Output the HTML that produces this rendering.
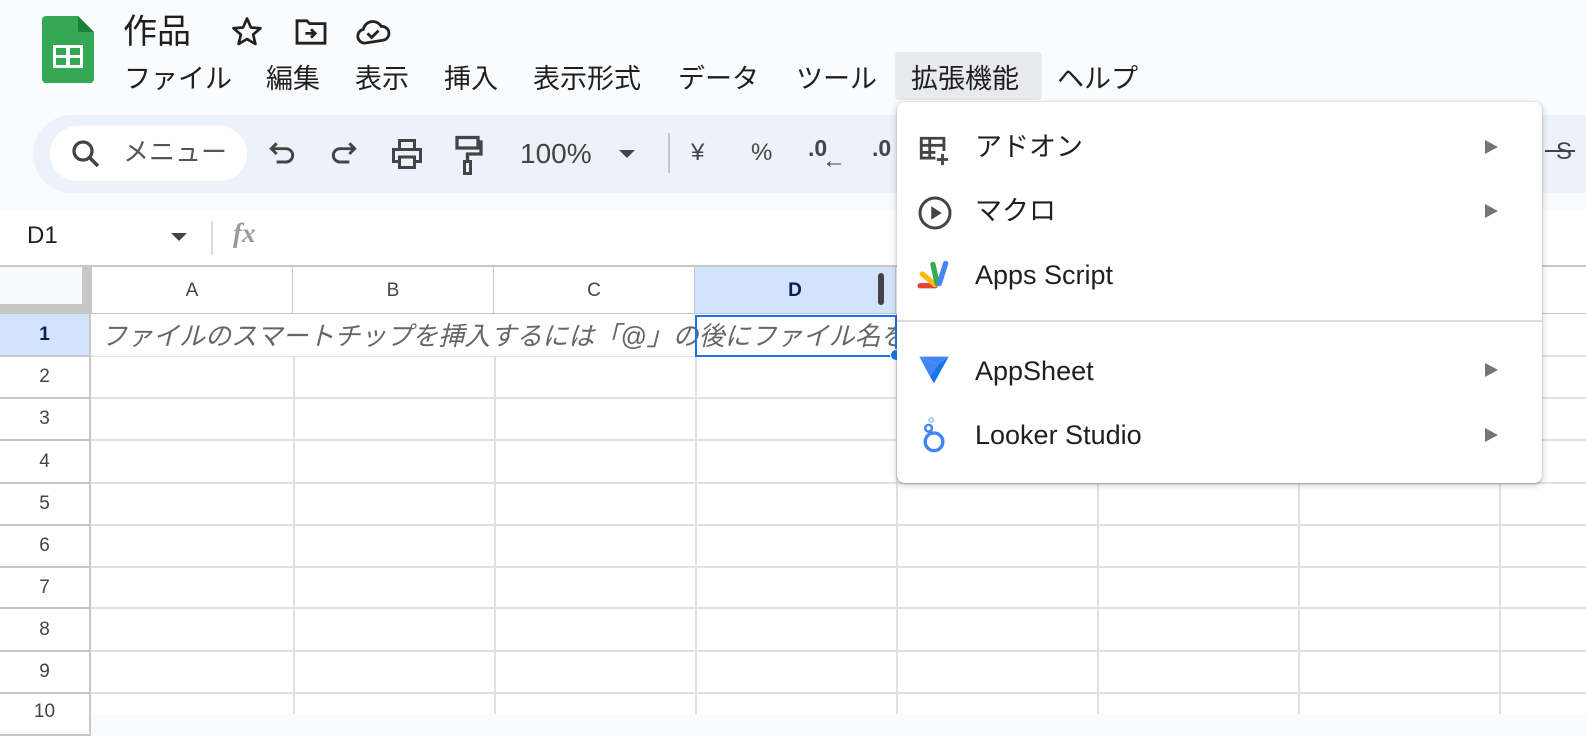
<!DOCTYPE html>
<html><head><meta charset="utf-8"><style>
*{box-sizing:border-box;margin:0;padding:0}
body{width:1586px;height:714px;overflow:hidden;background:#f9fbfd;font-family:"Liberation Sans","Noto Sans CJK JP",sans-serif;color:#1f1f1f;position:relative}
.abs{position:absolute}
.menu span{position:absolute;top:62px;font-size:27px;color:#1f1f1f;line-height:34px}
.tb{position:absolute;left:33px;top:115px;width:1600px;height:78px;background:#edf2fa;border-radius:40px}
.search{position:absolute;left:50px;top:126px;width:197px;height:55px;background:#fff;border-radius:28px;overflow:hidden}
.hdr{position:absolute;top:267px;height:47px;background:#f8f9fa;border-right:1px solid #c7c7c7;border-bottom:1px solid #c7c7c7;text-align:center;line-height:47px;font-size:19px;color:#444}
.rh{position:absolute;left:0;width:91px;border-bottom:2px solid #c7c7c7;border-right:2px solid #c7c7c7;background:#fff;text-align:center;font-size:19px;color:#444}
.hl{position:absolute;height:2px;background:#e1e1e1;left:91px;right:0}
.vl{position:absolute;width:2px;background:#e1e1e1;top:314px;bottom:0}
.dd{position:absolute;left:897px;top:102px;width:645px;height:381px;background:#fff;border-radius:8px;box-shadow:0 2px 6px 2px rgba(60,64,67,.15),0 1px 2px rgba(60,64,67,.3)}
.it{position:absolute;left:78px;font-size:27px;color:#1f1f1f;line-height:32px}
.ar{position:absolute;left:588px;width:0;height:0;border-top:7px solid transparent;border-bottom:7px solid transparent;border-left:13px solid #757575}
</style></head><body>
<svg class="abs" style="left:42px;top:16px" width="52" height="67" viewBox="0 0 52 67">
<path d="M4 0H36L52 16V63a4 4 0 0 1-4 4H4a4 4 0 0 1-4-4V4a4 4 0 0 1 4-4z" fill="#34a853"/>
<path d="M36 0L52 16H38a2 2 0 0 1-2-2z" fill="#188038"/>
<rect x="11" y="29" width="30" height="23" fill="#fff"/>
<rect x="14" y="32" width="10" height="7" fill="#34a853"/><rect x="28" y="32" width="10" height="7" fill="#34a853"/>
<rect x="14" y="42" width="10" height="7" fill="#34a853"/><rect x="28" y="42" width="10" height="7" fill="#34a853"/>
</svg>
<div class="abs" style="left:123px;top:10px;font-size:34px;color:#1f1f1f;line-height:44px">作品</div>
<svg class="abs" style="left:229px;top:14px" width="36" height="36" viewBox="0 0 24 24"><path d="M12 3l2.6 6 6.4.5-4.9 4.2 1.5 6.3L12 16.7 6.4 20l1.5-6.3L3 9.5 9.4 9z" fill="none" stroke="#222" stroke-width="1.8" stroke-linejoin="round"/></svg>
<svg class="abs" style="left:294px;top:18px" width="34" height="28" viewBox="0 0 24 20"><path d="M2 2h7l2 2h11v14H2z" fill="none" stroke="#222" stroke-width="2"/><path d="M8 11h7M12 8l3 3-3 3" fill="none" stroke="#222" stroke-width="2"/></svg>
<svg class="abs" style="left:355px;top:18px" width="36" height="28" viewBox="0 0 26 20"><path d="M7 18a5 5 0 0 1-1-9.9A7 7 0 0 1 19 6a5 5 0 0 1 1 10z" fill="none" stroke="#222" stroke-width="2"/><path d="M9 11l3 3 5-5" fill="none" stroke="#222" stroke-width="2"/></svg>
<div class="menu">
<span style="left:124px">ファイル</span><span style="left:266px">編集</span><span style="left:355px">表示</span><span style="left:444px">挿入</span><span style="left:533px">表示形式</span><span style="left:678px">データ</span><span style="left:796px">ツール</span>
<div class="abs" style="left:895px;top:52px;width:147px;height:48px;background:#e8eaed;border-radius:4px"></div>
<span style="left:911px">拡張機能</span><span style="left:1057px">ヘルプ</span>
</div>
<div class="tb"></div>
<div class="search"><div class="abs" style="left:73px;top:9px;font-size:26px;color:#555;white-space:nowrap;line-height:34px">メニュー</div></div>
<svg class="abs" style="left:68px;top:136px" width="36" height="36" viewBox="0 0 24 24"><circle cx="10" cy="10" r="6" fill="none" stroke="#444" stroke-width="2.2"/><path d="M14.5 14.5L20 20" stroke="#444" stroke-width="2.4"/></svg>
<svg class="abs" style="left:266px;top:138px" width="32" height="32" viewBox="0 0 24 24"><path d="M5 8h10a5 5 0 0 1 0 10H8M8 4L4 8l4 4" fill="none" stroke="#444" stroke-width="2.2"/></svg>
<svg class="abs" style="left:328px;top:138px" width="32" height="32" viewBox="0 0 24 24"><path d="M19 8H9a5 5 0 0 0 0 10h7M16 4l4 4-4 4" fill="none" stroke="#444" stroke-width="2.2"/></svg>
<svg class="abs" style="left:389px;top:136px" width="36" height="36" viewBox="0 0 24 24"><path d="M7 8V3h10v5M6 17H3V9h18v8h-3M7 14h10v7H7z" fill="none" stroke="#444" stroke-width="2"/></svg>
<svg class="abs" style="left:454px;top:134px" width="30" height="43" viewBox="0 0 20 28"><rect x="2" y="2" width="14" height="7" fill="none" stroke="#444" stroke-width="2.2"/><path d="M16 5h2v8H9v5" fill="none" stroke="#444" stroke-width="2.2"/><rect x="7" y="18" width="4" height="8" fill="none" stroke="#444" stroke-width="2"/></svg>
<div class="abs" style="left:520px;top:137px;font-size:28px;color:#444;line-height:34px">100%</div>
<div class="abs" style="left:619px;top:150px;border-left:8px solid transparent;border-right:8px solid transparent;border-top:8px solid #444"></div>
<div class="abs" style="left:668px;top:133px;width:2px;height:40px;background:#c7c7c7"></div>
<div class="abs" style="left:691px;top:139px;font-size:24px;color:#444">¥</div>
<div class="abs" style="left:751px;top:139px;font-size:24px;color:#444">%</div>
<div class="abs" style="left:808px;top:135px;font-size:23px;color:#444;font-weight:bold">.0</div>
<div class="abs" style="left:822px;top:147px;font-size:24px;color:#444;font-weight:bold">←</div>
<div class="abs" style="left:872px;top:135px;font-size:23px;color:#444;font-weight:bold">.0</div>
<div class="abs" style="left:1545px;top:150px;width:30px;height:2px;background:#444"></div>
<div class="abs" style="left:1556px;top:138px;font-size:24px;color:#444">S</div>
<div class="abs" style="left:0;top:210px;width:1586px;height:57px;background:#fff"></div>
<div class="abs" style="left:27px;top:222px;font-size:24px;color:#1f1f1f">D1</div>
<div class="abs" style="left:171px;top:233px;border-left:8px solid transparent;border-right:8px solid transparent;border-top:8px solid #444"></div>
<div class="abs" style="left:211px;top:221px;width:2px;height:34px;background:#dadce0"></div>
<div class="abs" style="left:233px;top:218px;font-size:27px;color:#999;font-style:italic;font-weight:bold;font-family:'Liberation Serif',serif">fx</div>
<div class="abs" style="left:0;top:265px;width:1586px;height:2px;background:#c7c7c7"></div>
<div class="abs" style="left:0;top:314px;width:1586px;height:400px;background:#fff"></div>
<div class="hdr" style="left:0;width:92px;border-right:10px solid #c7c7c7;border-bottom:10px solid #c7c7c7"></div>
<div class="hdr" style="left:92px;width:201px;background:#fff">A</div>
<div class="hdr" style="left:293px;width:201px;background:#fff">B</div>
<div class="hdr" style="left:494px;width:201px;background:#fff">C</div>
<div class="hdr" style="left:695px;width:201px;background:#d3e3fd;color:#0b1e4e;font-weight:bold">D</div>
<div class="abs" style="left:878px;top:273px;width:6px;height:32px;background:#444;border-radius:3px"></div>
<div class="hdr" style="left:896px;width:201px;background:#fff"></div>
<div class="hdr" style="left:1097px;width:201px;background:#fff"></div>
<div class="hdr" style="left:1298px;width:201px;background:#fff"></div>
<div class="hdr" style="left:1499px;width:100px;background:#fff"></div>
<div class="vl" style="left:293px"></div><div class="vl" style="left:494px"></div><div class="vl" style="left:695px"></div><div class="vl" style="left:896px"></div><div class="vl" style="left:1097px"></div><div class="vl" style="left:1298px"></div><div class="vl" style="left:1499px"></div>
<div class="hl" style="top:355px"></div><div class="hl" style="top:397px"></div><div class="hl" style="top:439px"></div><div class="hl" style="top:482px"></div><div class="hl" style="top:524px"></div><div class="hl" style="top:566px"></div><div class="hl" style="top:607px"></div><div class="hl" style="top:650px"></div><div class="hl" style="top:692px"></div>
<div class="rh" style="top:314px;height:43px;line-height:41px;background:#d3e3fd;color:#0b1e4e;font-weight:bold">1</div>
<div class="rh" style="top:357px;height:42px;line-height:40px">2</div>
<div class="rh" style="top:399px;height:42px;line-height:40px">3</div>
<div class="rh" style="top:441px;height:43px;line-height:41px">4</div>
<div class="rh" style="top:484px;height:42px;line-height:40px">5</div>
<div class="rh" style="top:526px;height:42px;line-height:40px">6</div>
<div class="rh" style="top:568px;height:41px;line-height:39px">7</div>
<div class="rh" style="top:609px;height:43px;line-height:41px">8</div>
<div class="rh" style="top:652px;height:42px;line-height:40px">9</div>
<div class="rh" style="top:694px;height:42px;line-height:36px">10</div>
<div class="abs" style="left:94px;top:314px;height:42px;font-size:26px;line-height:44px;font-style:italic;color:#666;white-space:nowrap;width:801px;overflow:hidden;background:#fff;padding-left:7px">ファイルのスマートチップを挿入するには「@」の後にファイル名を入力</div>
<div class="abs" style="left:695px;top:315px;width:202px;height:42px;border:2px solid #1a73e8"></div>
<div class="abs" style="left:890px;top:349px;width:12px;height:12px;border-radius:6px;background:#1a73e8;border:1px solid #fff"></div>
<div class="dd">
<svg class="abs" style="left:20px;top:32px" width="34" height="34" viewBox="0 0 24 24"><path d="M13 17H3V3h16v9M3 8h16M9 3v14M3 13h10" fill="none" stroke="#444" stroke-width="2"/><path d="M18 14v8M14 18h8" stroke="#444" stroke-width="2"/></svg>
<div class="it" style="top:29px">アドオン</div><div class="ar" style="top:38px"></div>
<svg class="abs" style="left:20px;top:93px" width="36" height="36" viewBox="0 0 24 24"><circle cx="12" cy="12" r="10" fill="none" stroke="#444" stroke-width="2"/><path d="M9.5 7.5v9l7-4.5z" fill="#444"/></svg>
<div class="it" style="top:93px">マクロ</div><div class="ar" style="top:102px"></div>
<svg class="abs" style="left:20px;top:156px" width="34" height="32" viewBox="0 0 32 30">
<path d="M3 26h14" stroke="#ea4335" stroke-width="5" stroke-linecap="round"/>
<path d="M5 15l12 10" stroke="#fbbc04" stroke-width="5" stroke-linecap="round"/>
<path d="M15 6l4 18" stroke="#34a853" stroke-width="5" stroke-linecap="round"/>
<path d="M27 5l-6 19" stroke="#4285f4" stroke-width="5" stroke-linecap="round"/>
</svg>
<div class="it" style="top:157px">Apps Script</div>
<div class="abs" style="left:0;top:218px;width:645px;height:2px;background:#dadce0"></div>
<svg class="abs" style="left:21px;top:252px" width="32" height="32" viewBox="0 0 24 24"><path d="M1 2h22l-8 6z" fill="#4285f4"/><path d="M15 8L23 2l-11 20-3-5z" fill="#1a73e8"/><path d="M1 2l14 6-6 9z" fill="#4285f4"/></svg>
<div class="it" style="top:253px">AppSheet</div><div class="ar" style="top:261px"></div>
<svg class="abs" style="left:23px;top:314px" width="28" height="38" viewBox="0 0 20 28"><circle cx="10" cy="19" r="6.5" fill="none" stroke="#4285f4" stroke-width="2.5"/><circle cx="6" cy="9" r="2.5" fill="none" stroke="#4285f4" stroke-width="1.8"/><circle cx="8" cy="3" r="1.6" fill="none" stroke="#a8c7fa" stroke-width="1.3"/></svg>
<div class="it" style="top:317px">Looker Studio</div><div class="ar" style="top:326px"></div>
</div>
</body></html>
